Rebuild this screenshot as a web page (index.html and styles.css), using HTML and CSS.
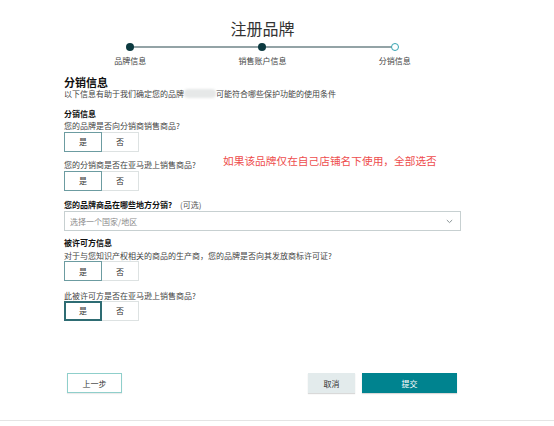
FILE: index.html
```html
<!DOCTYPE html>
<html lang="zh-CN">
<head>
<meta charset="utf-8">
<title>注册品牌</title>
<link rel="stylesheet" href="styles.css">
</head>
<body>
<div class="page">
  <h1 class="title">注册品牌</h1>
  <div class="steps">
    <div class="step"><span class="dot done"></span><span class="step-label">品牌信息</span></div>
    <div class="step"><span class="dot done"></span><span class="step-label">销售账户信息</span></div>
    <div class="step"><span class="dot current"></span><span class="step-label">分销信息</span></div>
  </div>

  <h2 class="heading">分销信息</h2>
  <p class="desc">以下信息有助于我们确定您的品牌<span class="blur"></span>可能符合哪些保护功能的使用条件</p>

  <h3 class="sub">分销信息</h3>
  <p class="q first">您的品牌是否向分销商销售商品?</p>
  <div class="toggle"><span class="opt yes sel">是</span><span class="opt no">否</span></div>

  <p class="q">您的分销商是否在亚马逊上销售商品?</p>
  <div class="toggle"><span class="opt yes sel">是</span><span class="opt no">否</span></div>

  <p class="q strong">您的品牌商品在哪些地方分销? <span class="optional">(可选)</span></p>
  <div class="select">
    <span class="placeholder">选择一个国家/地区</span>
    <svg class="chev" width="7" height="5" viewBox="0 0 7 5"><polyline points="0.8,1 3.5,3.6 6.2,1" fill="none" stroke="#8a9496" stroke-width="1"/></svg>
  </div>

  <h3 class="sub second">被许可方信息</h3>
  <p class="q first">对于与您知识产权相关的商品的生产商，您的品牌是否向其发放商标许可证?</p>
  <div class="toggle"><span class="opt yes sel">是</span><span class="opt no">否</span></div>

  <p class="q last">此被许可方是否在亚马逊上销售商品?</p>
  <div class="toggle tight"><span class="opt yes focus">是</span><span class="opt no">否</span></div>

  <div class="actions">
    <button class="btn prev">上一步</button>
    <div class="right">
      <button class="btn cancel">取消</button>
      <button class="btn submit">提交</button>
    </div>
  </div>
</div>
<div class="rule"></div>
<div class="note">如果该品牌仅在自己店铺名下使用，全部选否</div>
</body>
</html>
```

FILE: styles.css
```css
* { box-sizing: border-box; }
html, body { margin: 0; padding: 0; background: #fff; }
body {
  font-family: "Noto Sans CJK SC", "Noto Sans", sans-serif;
  color: #333;
  width: 554px;
  height: 426px;
  overflow: hidden;
  position: relative;
}
.page {
  padding: 18px 0 0 64px;
  width: 461px;
}
.title {
  margin: 0;
  font-size: 16px;
  line-height: 20px;
  font-weight: 400;
  text-align: center;
  color: #333;
  width: 397px;
}
.steps {
  display: flex;
  width: 397px;
  margin-top: 5px;
  position: relative;
}
.steps::before {
  content: "";
  position: absolute;
  left: 66px;
  right: 66px;
  top: 3px;
  height: 2px;
  background: #93a3a6;
}
.step {
  flex: 1;
  display: flex;
  flex-direction: column;
  align-items: center;
  position: relative;
}
.dot {
  width: 8px;
  height: 8px;
  border-radius: 50%;
  background: #0c3a40;
}
.dot.current {
  background: #fff;
  border: 1px solid #35a4b2;
}
.step-label {
  margin-top: 5px;
  font-size: 8px;
  line-height: 10px;
  color: #444;
}
.heading {
  margin: 9.5px 0 0;
  font-size: 11px;
  line-height: 13px;
  font-weight: 700;
  color: #111;
}
.desc {
  margin: 0;
  font-size: 8px;
  line-height: 10px;
  color: #444;
  white-space: nowrap;
}
.blur {
  display: inline-block;
  width: 32px;
  height: 9px;
  vertical-align: -1px;
  background: #e6e8e8;
  border-radius: 4px;
  filter: blur(1.2px);
}
.sub {
  margin: 10px 0 0;
  font-size: 8px;
  line-height: 10px;
  font-weight: 700;
  color: #111;
}
.sub.second { margin-top: 7.3px; }
.q {
  margin: 8px 0 1px;
  font-size: 8px;
  line-height: 10px;
  color: #444;
  white-space: nowrap;
}
.q.first { margin-top: 2.5px; margin-bottom: 0.5px; }
.q.strong { font-weight: 700; color: #111; margin-top: 9.7px; }
.q.last { margin-top: 9.3px; margin-bottom: 0; }
.optional {
  font-weight: 400;
  color: #555;
  margin-left: 6px;
}
.toggle {
  display: flex;
  height: 20px;
}
.opt {
  display: flex;
  align-items: center;
  justify-content: center;
  height: 20px;
  font-size: 8px;
  color: #333;
  border: 1px solid #dde2e2;
}
.opt.yes { width: 38px; }
.opt.no { width: 37px; border-left: none; }
.opt.sel { border-color: #6c9ca1; }
.opt.focus { border: 2px solid #2e6c73; }
.select {
  margin-top: 1px;
  width: 397px;
  height: 20px;
  border: 1px solid #c7d0d1;
  display: flex;
  align-items: center;
  justify-content: space-between;
  padding: 0 7px 0 5px;
}
.placeholder {
  font-size: 8px;
  color: #8a8a8a;
}
.actions {
  margin-top: 52.3px;
  width: 393px;
  padding-left: 3px;
  display: flex;
  justify-content: space-between;
}
.right {
  display: flex;
  gap: 7px;
}
.btn {
  font-family: inherit;
  font-size: 8px;
  height: 20px;
  padding: 0;
  margin: 0;
  border: none;
  color: #333;
  cursor: pointer;
}
.btn.prev {
  width: 55px;
  background: #fff;
  border: 1px solid #8fcfcb;
  box-shadow: 0 1px 1px rgba(0,0,0,0.08);
}
.btn.cancel {
  width: 47px;
  background: #e3ebec;
  box-shadow: 0 1px 1px rgba(0,0,0,0.15);
}
.btn.submit {
  width: 95px;
  background: #00838f;
  color: #fff;
  box-shadow: 0 1px 1px rgba(0,0,0,0.15);
}
.rule {
  margin-top: 27.4px;
  width: 554px;
  border-top: 1px solid #e4e4e4;
}
.note {
  position: absolute;
  left: 223px;
  top: 154px;
  font-size: 10.7px;
  line-height: 13px;
  color: #ee4d4d;
  white-space: nowrap;
}
```
